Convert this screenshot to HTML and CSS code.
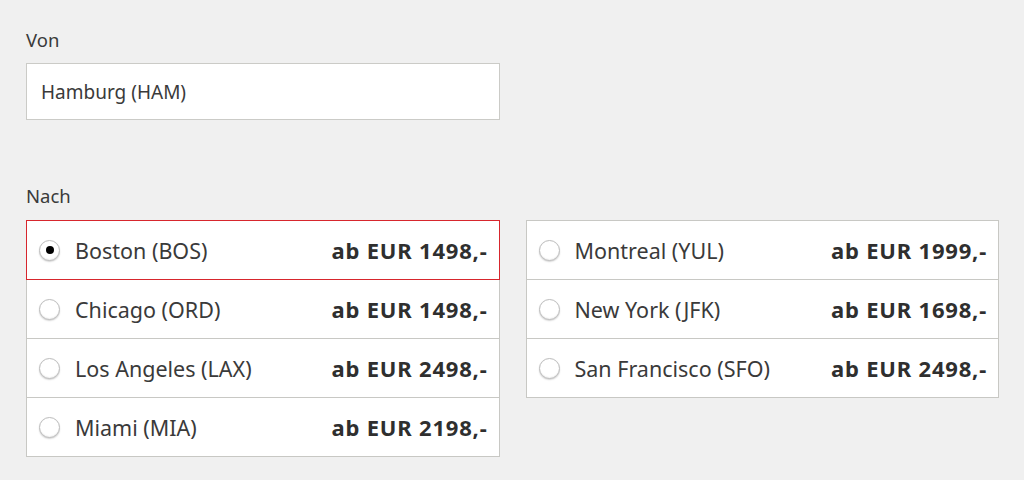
FILE: index.html
```html
<!DOCTYPE html>
<html lang="de">
<head>
<meta charset="utf-8">
<link rel="stylesheet" href="styles.css">
</head>
<body>
<div class="page">
  <div class="field">
    <div class="label">Von</div>
    <div class="input">Hamburg (HAM)</div>
  </div>
  <div class="field nach">
    <div class="label">Nach</div>
    <div class="cols">
      <div class="list">
        <label class="row selected"><span class="radio checked"></span><span class="city">Boston (BOS)</span><span class="price">ab EUR 1498,-</span></label>
        <label class="row"><span class="radio"></span><span class="city">Chicago (ORD)</span><span class="price">ab EUR 1498,-</span></label>
        <label class="row"><span class="radio"></span><span class="city">Los Angeles (LAX)</span><span class="price">ab EUR 2498,-</span></label>
        <label class="row"><span class="radio"></span><span class="city">Miami (MIA)</span><span class="price">ab EUR 2198,-</span></label>
      </div>
      <div class="list">
        <label class="row"><span class="radio"></span><span class="city">Montreal (YUL)</span><span class="price">ab EUR 1999,-</span></label>
        <label class="row"><span class="radio"></span><span class="city">New York (JFK)</span><span class="price">ab EUR 1698,-</span></label>
        <label class="row"><span class="radio"></span><span class="city">San Francisco (SFO)</span><span class="price">ab EUR 2498,-</span></label>
      </div>
    </div>
  </div>
</div>
</body>
</html>
```

FILE: styles.css
```css
html, body {
  margin: 0;
  padding: 0;
  background: #f0f0f0;
}
body {
  font-family: "Noto Sans", "Open Sans", sans-serif;
  color: #333;
}
.page {
  padding: 28px 25px 0 26px;
}
.label {
  font-size: 18.5px;
  line-height: 24px;
  color: #3a3a3a;
}
.input {
  margin-top: 11px;
  height: 55px;
  background: #fff;
  border: 1px solid #cbcbc7;
  box-sizing: content-box;
  display: flex;
  align-items: center;
  padding: 0 0 0 14px;
  width: 458px;
  font-size: 19px;
  color: #3a3a3a;
}
.nach {
  margin-top: 64px;
}
.nach .label {
  margin-bottom: 12px;
}
.cols {
  display: flex;
  gap: 26px;
  align-items: flex-start;
}
.list {
  width: 474px;
  display: flex;
  flex-direction: column;
}
.row {
  position: relative;
  display: flex;
  align-items: center;
  height: 60px;
  box-sizing: border-box;
  background: #fff;
  border: 1px solid #c8c8c4;
  padding: 0 12px 0 12px;
  font-size: 21.5px;
}
.row + .row {
  margin-top: -1px;
}
.row.selected {
  border-color: #d7262d;
  z-index: 1;
}
.radio {
  width: 21px;
  height: 21px;
  border-radius: 50%;
  box-sizing: border-box;
  border: 1px solid #bdbdbd;
  background: #fff;
  box-shadow: inset 0 -1px 1px rgba(0,0,0,0.05), 0 1px 1.5px rgba(0,0,0,0.18);
  flex: none;
  position: relative;
}
.radio.checked::after {
  content: "";
  position: absolute;
  left: 50%;
  top: 50%;
  width: 8px;
  height: 8px;
  margin: -4px 0 0 -4px;
  border-radius: 50%;
  background: #000;
}
.city {
  margin-left: 15px;
  flex: 1;
  color: #3a3a3a;
}
.price {
  font-size: 22px;
  letter-spacing: 0.8px;
  margin-right: -1px;
  font-weight: 700;
  color: #2f2f2f;
}
```
